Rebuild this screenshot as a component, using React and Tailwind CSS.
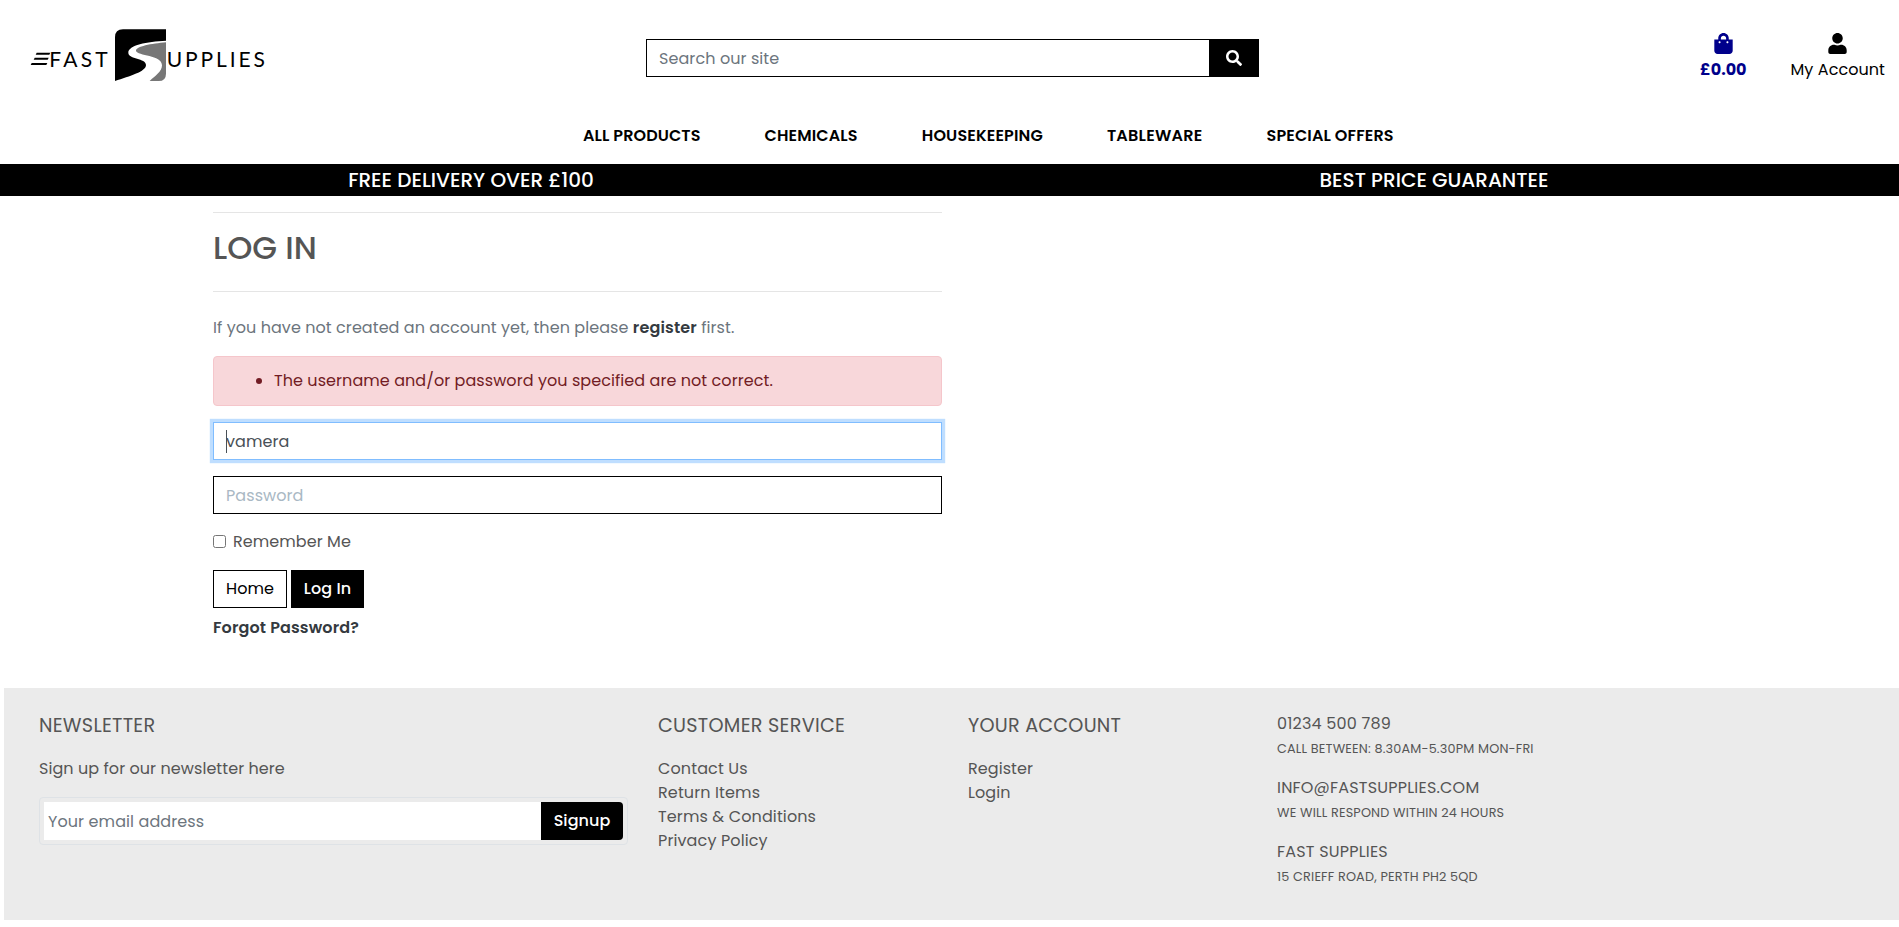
import { FaSearch, FaShoppingBag, FaUser } from "react-icons/fa";

function Logo() {
  return (
    <svg viewBox="0 0 780 210" className="h-[70px] w-[260px]" role="img" aria-label="Fast Supplies">
      <g fill="#000">
        <path d="M50 98h41l-3 6H47z" />
        <path d="M44 113h42l-3 6H41z" />
        <path d="M35 129h47l-3 6H32z" />
        <path d="M309 28H438V62C380 65 325 75 325 98C325 119 378 113 378 135C378 155 330 168 285 183V52Q285 28 309 28Z" />
      </g>
      <path
        fill="#777"
        d="M438 67C395 71 347 79 348 93C352 108 426 104 426 136C426 155 405 168 389 183H416Q438 183 438 161Z"
      />
      <g fill="#000" fontFamily="Lato, sans-serif" fontSize="63">
        <text x="88" y="140" textLength="175" lengthAdjust="spacing">FAST</text>
        <text x="440" y="140" textLength="295" lengthAdjust="spacing">UPPLIES</text>
      </g>
    </svg>
  );
}

function Header() {
  return (
    <header className="text-black">
      <div className="flex h-[124px] items-start">
        <div className="w-[646px] pl-5 pt-5">
          <Logo />
        </div>
        <form className="mt-[39px] flex h-[38px] w-[613px]">
          <div className="flex flex-1 items-center border border-r-0 border-black px-3 pt-0.5 tracking-[0.08px] text-[#6c757d]">
            Search our site
          </div>
          <button type="button" className="flex w-[50px] items-center justify-center bg-black text-white">
            <FaSearch className="size-4" />
          </button>
        </form>
        <div className="ml-auto flex pr-[14px] pt-[33px]">
          <a className="mr-[44px] flex flex-col items-center font-bold tracking-normal text-[#00008b]">
            <FaShoppingBag className="mb-1 size-[21px]" />
            £0.00
          </a>
          <a className="flex flex-col items-center">
            <FaUser className="mb-1 size-[21px]" />
            My Account
          </a>
        </div>
      </div>
      <nav className="flex h-10 gap-16 pl-[583px] font-semibold whitespace-nowrap">
        <a className="tracking-[0.09px]">ALL PRODUCTS</a>
        <a className="tracking-[0.15px]">CHEMICALS</a>
        <a className="tracking-[0.15px]">HOUSEKEEPING</a>
        <a className="tracking-[0.25px]">TABLEWARE</a>
        <a className="tracking-[0.12px]">SPECIAL OFFERS</a>
      </nav>
      <div className="flex h-8 items-center bg-black text-xl font-medium tracking-normal text-white">
        <p className="w-[942px] pb-px text-center">FREE DELIVERY OVER £100</p>
        <p className="flex-1 pb-px pl-[27px] text-center">BEST PRICE GUARANTEE</p>
      </div>
    </header>
  );
}

function Login() {
  return (
    <main className="ml-[213px] h-[492px] w-[729px] pt-4">
      <hr className="border-[#e5e5e5]" />
      <h1 className="mt-4 mb-6 text-[32px] leading-[38px] font-medium tracking-normal">LOG IN</h1>
      <hr className="border-[#e5e5e5]" />
      <p className="mt-6 mb-4 whitespace-nowrap text-[#6c757d]">
        If you have not created an account yet, then please{" "}
        <a className="font-semibold tracking-[0.15px] text-[#343a40]">register</a> first.
      </p>
      <div className="flex h-[50px] items-center rounded border border-[#f5c6cb] bg-[#f8d7da] pl-[42px] text-[#721c24]">
        <span className="mr-[12px] size-1.5 rounded-full bg-[#721c24]" />
        <p>The username and/or password you specified are not correct.</p>
      </div>
      <div className="relative mt-4 flex h-[38px] items-center border border-[#80bdff] px-3 pt-0.5 shadow-[0_0_0_3.2px_#bfdeff]">
        <span className="absolute top-[7px] left-3 h-[23px] w-px bg-[#495057]" />
        <span className="text-[#495057]">vamera</span>
      </div>
      <div className="mt-4 flex h-[38px] items-center border border-black px-3 pt-0.5 text-[#a9b8c4]">
        Password
      </div>
      <label className="mt-[16px] flex items-center">
        <span className="mr-[7px] mb-0.5 size-[13px] rounded-[2.5px] border border-[#767676] bg-white" />
        <span>Remember Me</span>
      </label>
      <div className="mt-4 flex gap-1">
        <a className="flex h-[38px] w-[74px] items-center border border-black pl-3 text-black">
          Home
        </a>
        <button type="button" className="h-[38px] w-[73px] bg-black font-medium text-white">
          Log In
        </button>
      </div>
      <a className="mt-2 block font-semibold tracking-[0.13px] text-[#343a40]">Forgot Password?</a>
    </main>
  );
}

function Contact({ title, note }) {
  return (
    <div className="mb-[15px]">
      <p className="tracking-[0.2px]">{title}</p>
      <p className="mt-px text-[12.8px] leading-6 tracking-[0.17px]">{note}</p>
    </div>
  );
}

function Footer() {
  return (
    <footer className="ml-1 flex h-[232px] bg-[#ebebeb] pt-6 pl-[35px] whitespace-nowrap">
      <section className="w-[619px] pt-0.5">
        <h2 className="mb-[20px] text-[19.2px] leading-[23px] tracking-[0.27px]">NEWSLETTER</h2>
        <p>Sign up for our newsletter here</p>
        <form className="mt-4 flex h-12 w-[589px] rounded border border-[#dee2e6] p-1">
          <div className="flex h-[38px] w-[497px] items-center bg-white pt-0.5 pl-1 tracking-[0.1px] text-[#6c757d]">
            Your email address
          </div>
          <button
            type="button"
            className="h-[38px] w-[82px] rounded-r bg-black font-medium text-white"
          >
            Signup
          </button>
        </form>
      </section>
      <section className="w-[310px] pt-0.5">
        <h2 className="mb-[20px] text-[19.2px] leading-[23px] tracking-[0.27px]">CUSTOMER SERVICE</h2>
        <ul className="tracking-[0.12px]">
          <li>Contact Us</li>
          <li>Return Items</li>
          <li>Terms &amp; Conditions</li>
          <li>Privacy Policy</li>
        </ul>
      </section>
      <section className="w-[309px] pt-0.5">
        <h2 className="mb-[20px] text-[19.2px] leading-[23px] tracking-[0.22px]">YOUR ACCOUNT</h2>
        <ul>
          <li>Register</li>
          <li>Login</li>
        </ul>
      </section>
      <section>
        <Contact title="01234 500 789" note="CALL BETWEEN: 8.30AM-5.30PM MON-FRI" />
        <Contact title="INFO@FASTSUPPLIES.COM" note="WE WILL RESPOND WITHIN 24 HOURS" />
        <Contact title="FAST SUPPLIES" note="15 CRIEFF ROAD, PERTH PH2 5QD" />
      </section>
    </footer>
  );
}

export default function App() {
  return (
    <div className="h-[927px] overflow-hidden bg-white font-[Poppins,Inter,sans-serif] text-base leading-6 tracking-[0.065px] text-[#555]">
      <Header />
      <Login />
      <Footer />
    </div>
  );
}
